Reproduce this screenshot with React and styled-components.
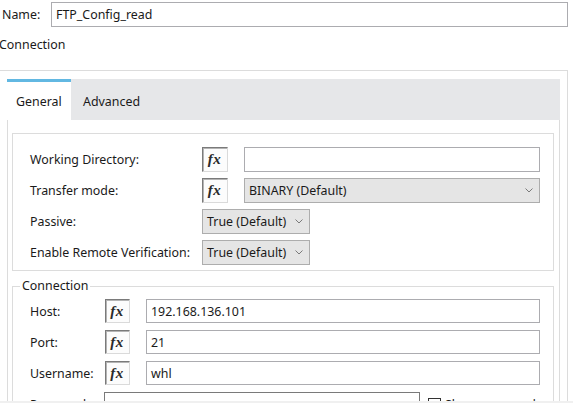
import styled, { createGlobalStyle } from "styled-components";

const GlobalStyle = createGlobalStyle`
  html, body {
    margin: 0;
    padding: 0;
    background: #fff;
  }
  body {
    font-family: "Noto Sans", "Open Sans", sans-serif;
    font-size: 12.4px;
    color: #1a1a1a;
  }
`;

const Page = styled.div`
  width: 573px;
  height: 403px;
  display: flex;
  flex-direction: column;
  overflow: hidden;
  background: #fff;
`;

const Content = styled.div`
  flex: 1;
  overflow: hidden;
  padding-top: 2px;
`;

const BottomBar = styled.div`
  height: 2px;
  background: #f0f0f0;
`;

const NameRow = styled.div`
  display: flex;
  align-items: center;
  height: 25px;
  padding-left: 2px;
  margin-right: 5px;
`;

const NameLabel = styled.span`
  width: 49px;
  flex: none;
`;

const TextInput = styled.div`
  box-sizing: border-box;
  height: ${(p) => p.$h || 25}px;
  flex: ${(p) => (p.$w ? "none" : "1")};
  width: ${(p) => (p.$w ? `${p.$w}px` : "auto")};
  border: 1px solid ${(p) => (p.$dark ? "#7a7a7a" : "#acacb0")};
  background: #fff;
  display: flex;
  align-items: center;
  padding-left: 4px;
  white-space: nowrap;
`;

const SectionTitle = styled.div`
  margin: 10px 0 0 -1px;
  line-height: 16px;
`;

const OuterBox = styled.div`
  margin: 17px 5px 0 -8px;
  border: 1px solid #dcdcdc;
  padding: 8px 7px 0 14px;
  height: 400px;
`;

const TabStrip = styled.div`
  display: flex;
  height: 41px;
  background: #e6e7e9;
`;

const Tab = styled.div`
  box-sizing: border-box;
  height: 41px;
  display: flex;
  align-items: center;
  padding: 0 ${(p) => (p.$active ? "11px 0 9px" : "12px")};
  width: ${(p) => (p.$active ? "64px" : "auto")};
  background: ${(p) => (p.$active ? "#fff" : "transparent")};
  border-top: 3px solid ${(p) => (p.$active ? "#62b8e2" : "transparent")};
`;

const TabPanel = styled.div`
  border-left: 1px solid #dcdcdc;
  border-right: 1px solid #dcdcdc;
  padding: 13px 5px 0 4px;
  height: 400px;
`;

const Group = styled.div`
  border: 1px solid #dcdcdc;
  padding: 13px 13px 5px 17px;
  display: grid;
  grid-template-columns: 156px 26px 1fr;
  grid-auto-rows: 25px;
  column-gap: 16px;
  row-gap: 6px;
  align-items: center;
`;

const FieldSet = styled.fieldset`
  margin: 7px 0 0;
  border: 1px solid #dcdcdc;
  padding: 5px 13px 0 17px;
  min-width: 0;
`;

const Legend = styled.legend`
  margin-left: -10px;
  padding: 0 2px;
  line-height: 16px;
`;

const ConnGrid = styled.div`
  display: grid;
  grid-template-columns: 59px 25px 1fr;
  grid-auto-rows: 24px;
  column-gap: 16px;
  row-gap: 7px;
  align-items: center;
`;

const Label = styled.span`
  white-space: nowrap;
`;

const FxButton = styled.div`
  box-sizing: border-box;
  width: ${(p) => p.$w || 26}px;
  height: ${(p) => p.$h || 25}px;
  border: 1px solid;
  border-color: #7a7a7a #dadada #dadada #7a7a7a;
  box-shadow: inset 1px 1px 0 #b4b4b4;
  background: #fcfcfc;
  display: flex;
  align-items: center;
  justify-content: center;
  font-family: "Liberation Serif", "DejaVu Serif", serif;
  font-style: italic;
  font-weight: bold;
  font-size: 15px;
  color: #2a2a2a;
  letter-spacing: 0.5px;
  padding-right: 1px;
`;

const Select = styled.div`
  box-sizing: border-box;
  grid-column: ${(p) => p.$span || "auto"};
  width: ${(p) => (p.$w ? `${p.$w}px` : "auto")};
  height: 25px;
  border: 1px solid #adadad;
  background: #e5e5e5;
  display: flex;
  align-items: center;
  justify-content: space-between;
  padding: 0 6px 0 4px;
  white-space: nowrap;
`;

const Chevron = () => (
  <svg width="8" height="5" viewBox="0 0 8 5">
    <path d="M0.5 0.5 L4 4 L7.5 0.5" fill="none" stroke="#7a7a7a" strokeWidth="1" />
  </svg>
);

const PasswordCell = styled.div`
  grid-column: 2 / -1;
  display: flex;
  align-items: center;
  margin-left: -1px;
`;

const CheckBox = styled.span`
  box-sizing: border-box;
  width: 13px;
  height: 13px;
  border: 1px solid #333;
  margin: 0 4px 0 8px;
  flex: none;
`;

export default function App() {
  return (
    <Page>
      <GlobalStyle />
      <Content>
        <NameRow>
          <NameLabel>Name:</NameLabel>
          <TextInput>FTP_Config_read</TextInput>
        </NameRow>
        <SectionTitle>Connection</SectionTitle>
        <OuterBox>
          <TabStrip>
            <Tab $active>General</Tab>
            <Tab>Advanced</Tab>
          </TabStrip>
          <TabPanel>
            <Group>
              <Label>Working Directory:</Label>
              <FxButton>fx</FxButton>
              <TextInput />
              <Label>Transfer mode:</Label>
              <FxButton>fx</FxButton>
              <Select>
                BINARY (Default)
                <Chevron />
              </Select>
              <Label>Passive:</Label>
              <Select $span="2 / -1" $w={108}>
                True (Default)
                <Chevron />
              </Select>
              <Label>Enable Remote Verification:</Label>
              <Select $span="2 / -1" $w={108}>
                True (Default)
                <Chevron />
              </Select>
            </Group>
            <FieldSet>
              <Legend>Connection</Legend>
              <ConnGrid>
                <Label>Host:</Label>
                <FxButton $w={25} $h={24}>fx</FxButton>
                <TextInput $h={24}>192.168.136.101</TextInput>
                <Label>Port:</Label>
                <FxButton $w={25} $h={24}>fx</FxButton>
                <TextInput $h={24}>21</TextInput>
                <Label>Username:</Label>
                <FxButton $w={25} $h={24}>fx</FxButton>
                <TextInput $h={24}>whl</TextInput>
                <Label>Password:</Label>
                <PasswordCell>
                  <TextInput $h={24} $w={316} $dark />
                  <CheckBox />
                  <Label>Show password</Label>
                </PasswordCell>
              </ConnGrid>
            </FieldSet>
          </TabPanel>
        </OuterBox>
      </Content>
      <BottomBar />
    </Page>
  );
}
